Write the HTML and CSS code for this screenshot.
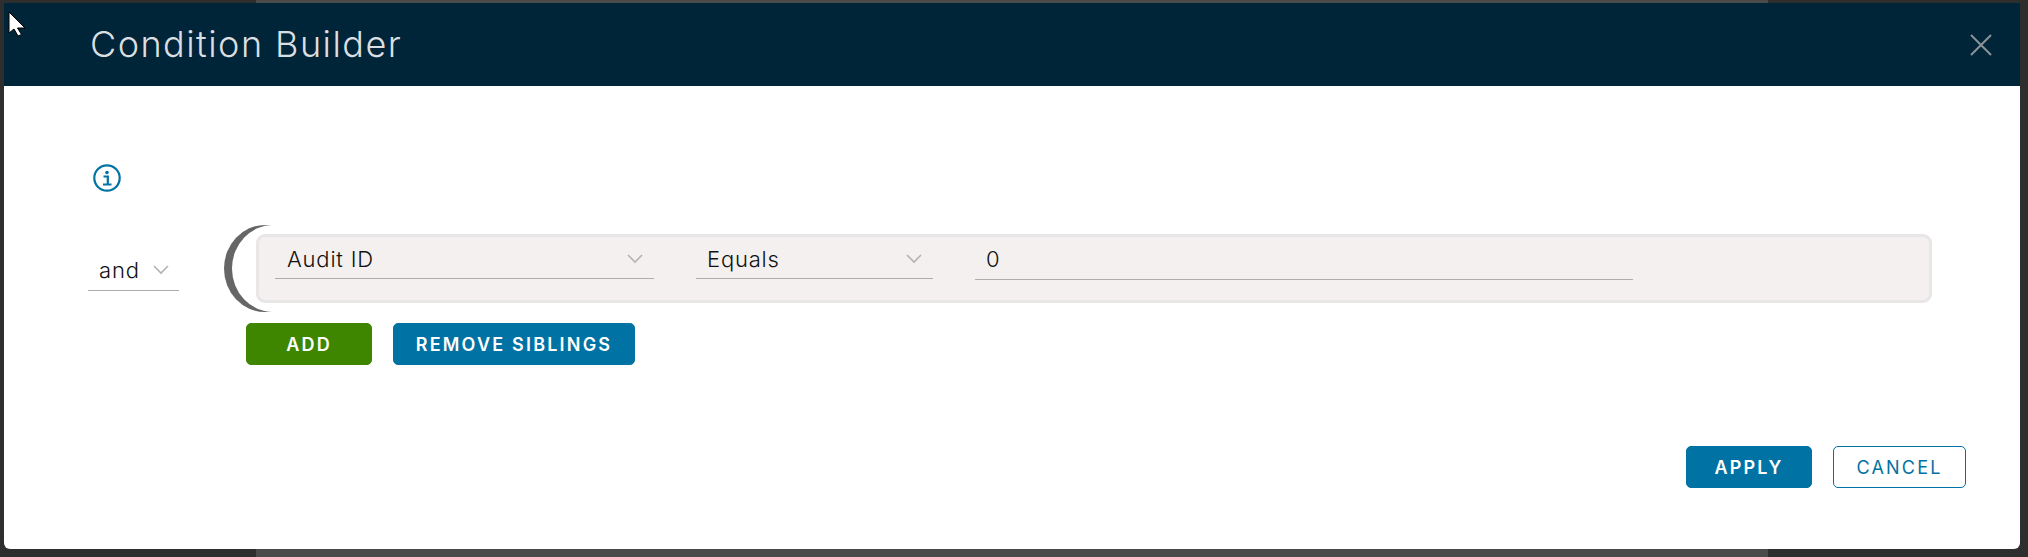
FILE: index.html
```html
<!DOCTYPE html>
<html lang="en">
<head>
    <meta charset="UTF-8">
    <meta name="viewport" content="width=device-width, initial-scale=1.0">
    <title>Condition Builder</title>
    <link rel="stylesheet" href="styles.css">
</head>
<body>
    <svg class="cursor" width="18" height="26" viewBox="0 0 18 26">
        <path d="M1 1v21l5-4 4 7 3.500-1.500-4-6.500h7.500z" fill="#fff" stroke="#000" stroke-width="1"/>
    </svg>
    <div class="modal">
        <div class="modal-header">
            <h1>Condition Builder</h1>
            <svg class="close" width="22" height="22" viewBox="0 0 22 22">
                <path d="M1 1l20 20M21 1L1 21" fill="none" stroke="#8c9298" stroke-width="2"/>
            </svg>
        </div>
        <div class="modal-body">
            <svg class="info" width="28" height="28" viewBox="0 0 28 28">
                <circle cx="14" cy="14" r="12.700" fill="none" stroke="#0072a3" stroke-width="2.200"/>
                <circle cx="14" cy="8.500" r="1.800" fill="#0072a3"/>
                <path d="M10.500 12.500h4.300v7.500M10 20.500h8.500" fill="none" stroke="#0072a3" stroke-width="2.200"/>
            </svg>
            <div class="condition-row">
                <div class="field and-select">
                    <span>and</span>
                    <svg class="chevron" width="16" height="10" viewBox="0 0 16 10"><path d="M1 1l7 7 7-7" fill="none" stroke="#b3b3b3" stroke-width="1.600"/></svg>
                </div>
                <div class="group">
                    <div class="group-line">
                        <div class="paren"></div>
                        <div class="panel">
                            <div class="field audit-select">
                                <span>Audit ID</span>
                                <svg class="chevron" width="16" height="10" viewBox="0 0 16 10"><path d="M1 1l7 7 7-7" fill="none" stroke="#b3b3b3" stroke-width="1.600"/></svg>
                            </div>
                            <div class="field equals-select">
                                <span>Equals</span>
                                <svg class="chevron" width="16" height="10" viewBox="0 0 16 10"><path d="M1 1l7 7 7-7" fill="none" stroke="#b3b3b3" stroke-width="1.600"/></svg>
                            </div>
                            <div class="field value-input"><span>0</span></div>
                        </div>
                    </div>
                    <div class="group-actions">
                        <button class="btn btn-add">ADD</button>
                        <button class="btn btn-primary btn-remove">REMOVE SIBLINGS</button>
                    </div>
                </div>
            </div>
            <div class="modal-footer">
                <button class="btn btn-primary btn-apply">APPLY</button>
                <button class="btn btn-outline btn-cancel">CANCEL</button>
            </div>
        </div>
    </div>
</body>
</html>
```

FILE: styles.css
```css
html, body {
    height: 100%;
}
body {
    margin: 0;
    padding: 3px 8px 8px 4px;
    box-sizing: border-box;
    overflow: hidden;
    background: linear-gradient(to right, #2e2e2e 256px, #4b4b4b 256px, #4b4b4b 1768px, #2e2e2e 1768px);
    font-family: "Inter", "Liberation Sans", sans-serif;
}
.cursor {
    position: absolute;
    left: 8px;
    top: 11px;
}
.modal {
    height: 546px;
    display: flex;
    flex-direction: column;
    background-color: #fff;
    border-radius: 0 0 6px 6px;
}
.modal-header {
    height: 83px;
    flex: none;
    display: flex;
    align-items: center;
    justify-content: space-between;
    padding: 0 28px 0 86px;
    background-color: #002538;
}
.modal-header h1 {
    margin: 0 0 2px;
    font-size: 36px;
    font-weight: 300;
    letter-spacing: 1.450px;
    color: #dcdfe1;
}
.modal-body {
    flex: 1;
    display: flex;
    flex-direction: column;
    padding: 78px 54px 61px 84px;
}
.info {
    display: block;
    margin-left: 5px;
}
.condition-row {
    display: flex;
    margin-top: 33px;
}
.field {
    display: flex;
    align-items: center;
    justify-content: space-between;
    box-sizing: border-box;
    border-bottom: 1px solid #adadad;
    font-size: 22px;
    font-weight: 300;
    letter-spacing: 0.800px;
    color: #111;
}
.and-select {
    width: 91px;
    height: 41px;
    margin-top: 25px;
    margin-right: 45px;
    padding: 0 10px 0 11px;
}
.group-line {
    display: flex;
    align-items: center;
}
.paren {
    width: 82px;
    height: 87px;
    flex: none;
    margin-right: -50px;
    border-radius: 50%;
    box-shadow: inset 8px 0 0 #666;
}
.panel {
    width: 1676px;
    height: 69px;
    box-sizing: border-box;
    display: flex;
    align-items: flex-start;
    padding: 2px 16px;
    background-color: #f3f0ef;
    border: 3px solid #e8e6e6;
    border-radius: 9px;
}
.audit-select {
    width: 379px;
    height: 40px;
    padding: 0 11px 0 12px;
    margin-right: 42px;
}
.equals-select {
    width: 237px;
    height: 40px;
    padding: 0 11px;
    margin-right: 42px;
}
.value-input {
    width: 658px;
    height: 41px;
    padding: 0 11px;
}
.group-actions {
    display: flex;
    gap: 21px;
    margin-top: 11px;
    margin-left: 22px;
}
.btn {
    height: 42px;
    box-sizing: border-box;
    padding: 0;
    border: 1px solid #0072a3;
    border-radius: 5px;
    font-family: inherit;
    font-size: 18px;
    font-weight: 600;
    letter-spacing: 2.200px;
    cursor: pointer;
}
.btn-add {
    width: 126px;
    border-color: #3f8600;
    background-color: #3f8600;
    color: #fff;
}
.btn-primary {
    background-color: #0072a3;
    color: #fff;
}
.btn-remove {
    width: 242px;
}
.btn-outline {
    background-color: #fff;
    color: #0072a3;
    font-weight: 400;
}
.modal-footer {
    display: flex;
    justify-content: flex-end;
    gap: 21px;
    margin-top: auto;
}
.btn-apply {
    width: 126px;
}
.btn-cancel {
    width: 133px;
}
```
